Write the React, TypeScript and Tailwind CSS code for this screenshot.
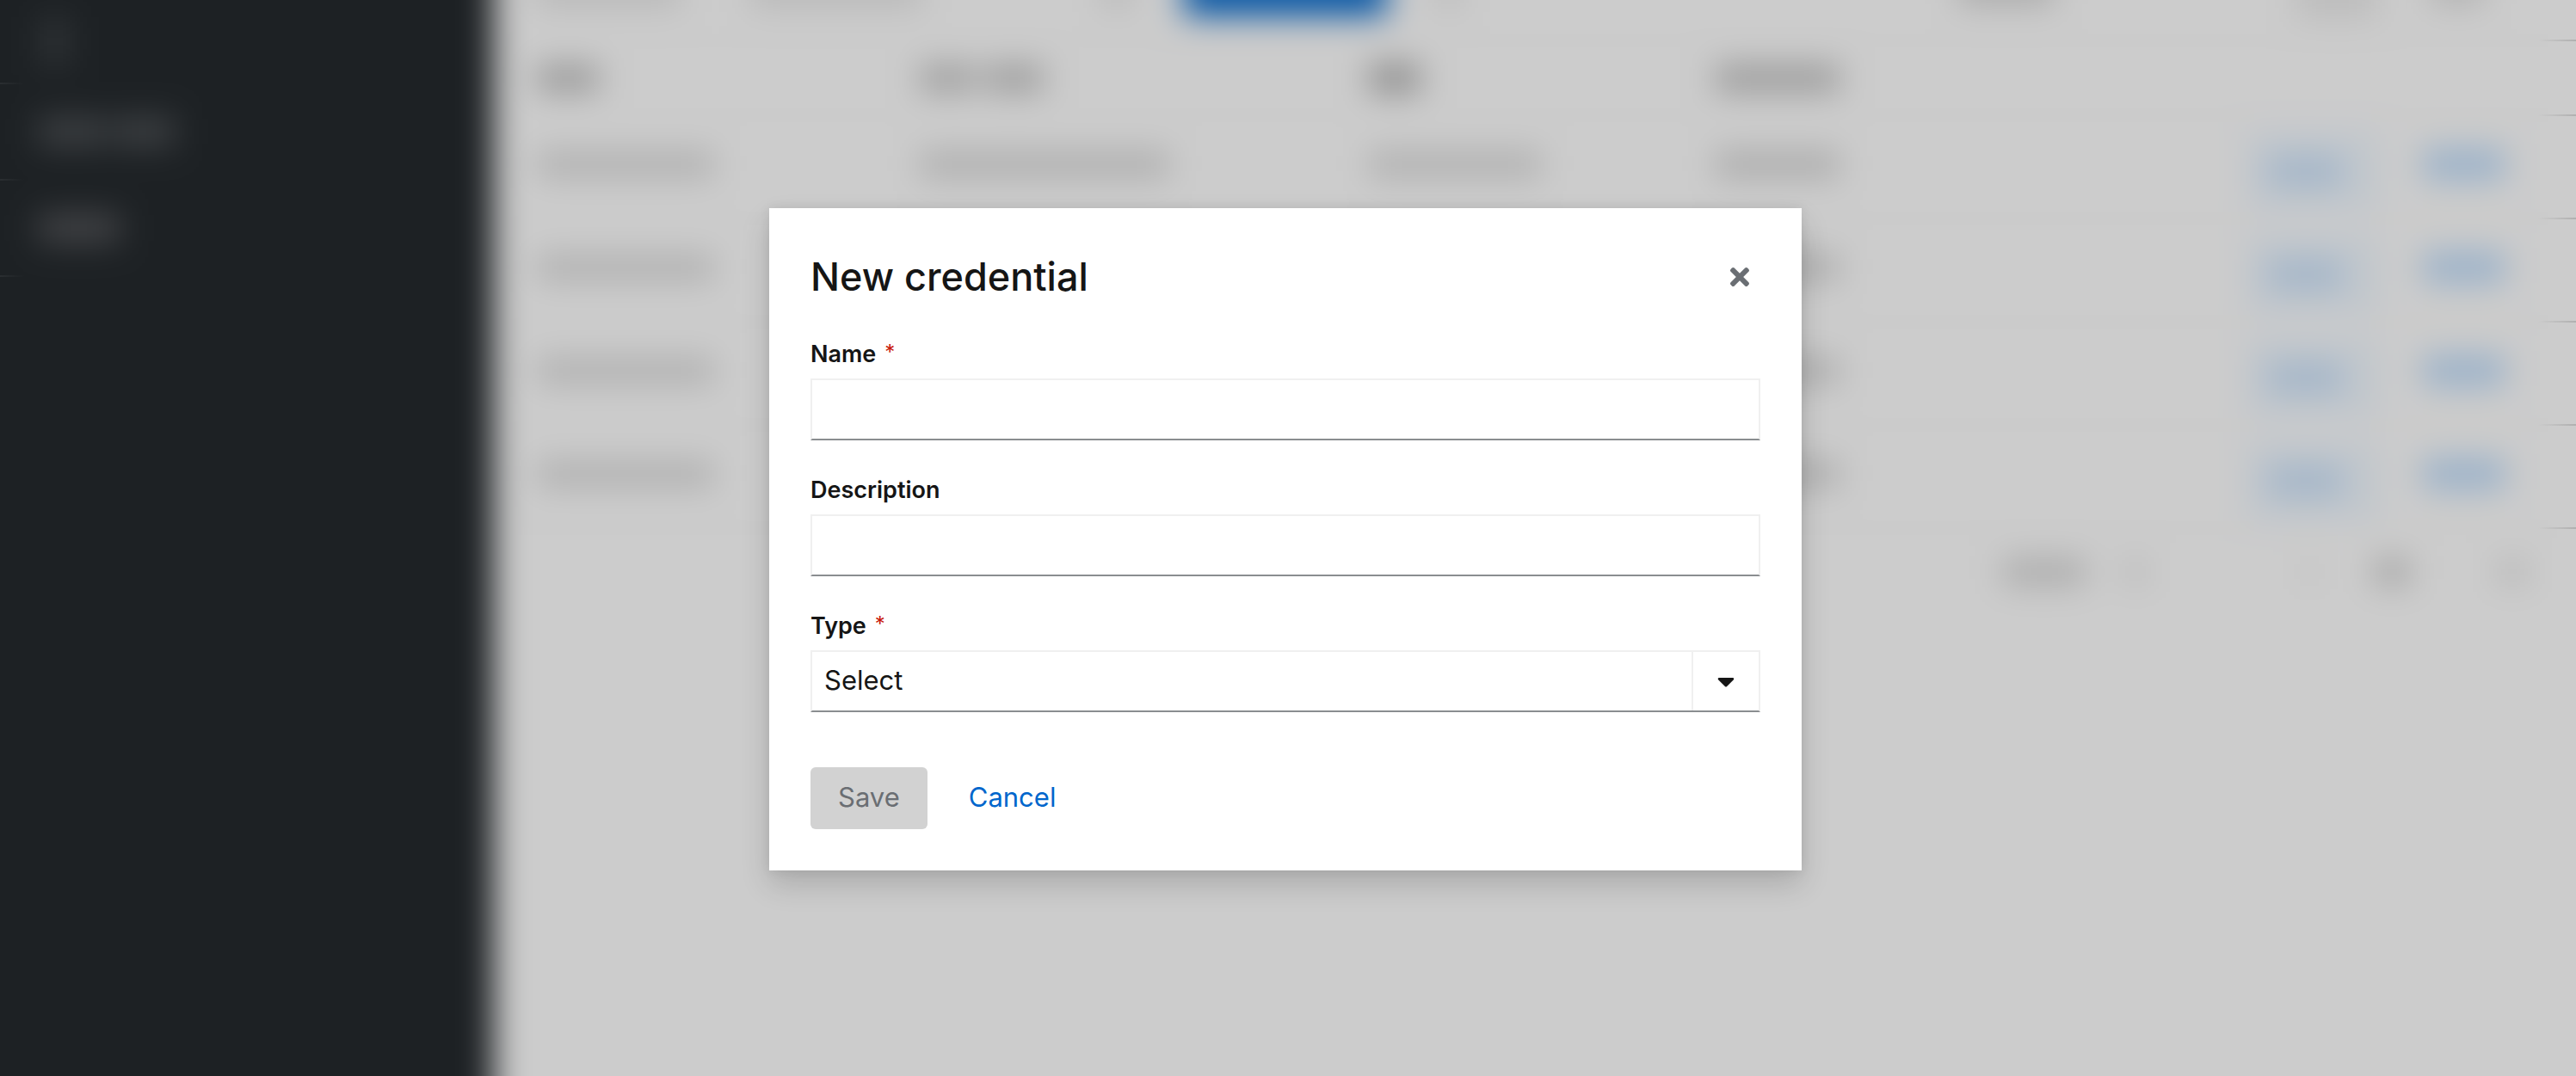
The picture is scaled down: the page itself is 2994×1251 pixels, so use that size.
import { useState } from "react";
import type { ReactNode } from "react";
import { FaCaretDown, FaTimes } from "react-icons/fa";

const rows = [1, 2, 3, 4];

function Sidebar() {
  return (
    <div className="flex w-[638px] shrink-0 flex-col bg-[#1d2124] pt-16 pl-16 shadow-[0_0_16px_8px_rgba(3,3,3,0.2)]">
      <div className="flex h-[98px] items-center border-b-2 border-[#24282b] px-12">
        <span className="h-14 w-8 bg-[#303437]" />
      </div>
      <div className="flex h-28 items-center gap-2 border-b-2 border-[#24282b] px-11">
        <span className="h-8 w-20 bg-[#404346]" />
        <span className="h-8 w-18 bg-[#404346]" />
      </div>
      <div className="flex h-28 items-center border-b-2 border-[#24282b] px-11">
        <span className="h-8 w-24 bg-[#46474a]" />
      </div>
    </div>
  );
}

function Grid({ children, className }: { children: ReactNode; className: string }) {
  return (
    <div
      className={
        "grid grid-cols-[445fr_522fr_402fr_618fr_382fr] items-center border-b-2 border-[#bfbfbf] pl-[50px] " +
        className
      }
    >
      {children}
    </div>
  );
}

function Listing() {
  return (
    <div className="flex min-w-0 grow flex-col bg-[#cccccc] pr-16">
      <div className="flex h-28 shrink-0 items-start border-b-2 border-[#bfbfbf] pt-8 pl-12">
        <span className="h-10 w-[170px] bg-[#b8b8b8]" />
        <span className="ml-20 h-10 w-[200px] bg-[#b8b8b8]" />
        <span className="ml-[210px] h-10 w-8 bg-[#b6b6b6]" />
        <span className="ml-[62px] h-[50px] w-[236px] bg-[#0052a3]" />
        <span className="ml-[60px] h-10 w-6 bg-[#b6b6b6]" />
        <span className="ml-[580px] h-9 w-28 bg-[#a8a8a8]" />
        <span className="ml-[280px] h-13 w-24 bg-[#bcbcbc]" />
        <span className="ml-[60px] h-9 w-16 bg-[#b0b0b0]" />
      </div>
      <Grid className="h-[87px]">
        <span className="h-7 w-18 bg-[#929292]" />
        <span className="flex gap-3">
          <span className="h-7 w-16 bg-[#989898]" />
          <span className="h-7 w-17 bg-[#969696]" />
        </span>
        <span className="h-8 w-15 bg-[#8a8a8a]" />
        <span className="h-7 w-36 bg-[#949494]" />
        <span />
      </Grid>
      {rows.map((row) => (
        <Grid key={row} className="h-[120px] pb-1.5">
          <span className="h-7 w-[206px] bg-[#adadad]" />
          <span className="h-7 w-[290px] bg-[#ababab]" />
          <span className="h-7 w-[200px] bg-[#adadad]" />
          <span className="h-7 w-36 bg-[#a8a8a8]" />
          <span className="flex items-center gap-13">
            <span className="mt-4 flex h-[88px] w-38 items-center border-8 border-[#bcc4cc] bg-[#c2c8cd] px-4">
              <span className="h-9 w-22 bg-[#a3b5c9]" />
            </span>
            <span className="h-9 w-[96px] bg-[#98b0c9]" />
          </span>
        </Grid>
      ))}
      <div className="flex h-[100px] items-center justify-end pr-14">
        <span className="h-7 w-24 bg-[#a8a8a8]" />
        <span className="ml-12 h-6 w-5 bg-[#b0b0b0]" />
        <span className="ml-[184px] h-5 w-4 bg-[#bcbcbc]" />
        <span className="ml-[68px] h-7 w-10 bg-[#a0a0a0]" />
        <span className="ml-[102px] h-6 w-9 bg-[#b4b4b4]" />
      </div>
    </div>
  );
}

function Edges() {
  return (
    <div className="absolute inset-0 flex items-start justify-between">
      <div className="w-7">
        {["h-[98px]", "h-28", "h-28"].map((h, i) => (
          <div key={i} className={"flex flex-col justify-end " + h}>
            <div className="h-0.5 bg-linear-to-l from-transparent to-[#2a2e31]" />
          </div>
        ))}
      </div>
      <div className="w-11">
        {["h-12", "h-[87px]", "h-[120px]", "h-[120px]", "h-[120px]", "h-[120px]"].map((h, i) => (
          <div key={i} className={"flex flex-col justify-end " + h}>
            <div className="h-0.5 bg-linear-to-r from-transparent to-[#b0b0b0]" />
          </div>
        ))}
      </div>
    </div>
  );
}

function Label({ id, required, children }: { id: string; required?: boolean; children: ReactNode }) {
  return (
    <label htmlFor={id} className="flex h-[46px] items-center gap-2.5 text-[27px] font-semibold">
      {children}
      {required && <span className="pb-1.5 text-2xl leading-8 font-normal text-[#c9190b]">*</span>}
    </label>
  );
}

const control =
  "h-[72px] w-full appearance-none rounded-none border-2 border-[#f0f0f0] border-b-[#8a8d90] bg-white px-3.5 text-[31px] text-[#151515] outline-none";

export default function App() {
  const [name, setName] = useState("");
  const [description, setDescription] = useState("");
  return (
    <div className="relative h-screen overflow-hidden bg-[#cccccc] font-['Inter',sans-serif] text-[#151515]">
      <div className="absolute -inset-16 flex blur-[19px]" aria-hidden="true">
        <Sidebar />
        <Listing />
      </div>
      <Edges />
      <div className="absolute inset-0 flex items-center justify-center pt-0.5 pr-1.5">
        <div
          role="dialog"
          aria-modal="true"
          aria-labelledby="title"
          className="w-[1200px] max-w-full bg-white p-12 shadow-[0_16px_32px_rgba(3,3,3,0.16),0_0_12px_rgba(3,3,3,0.08)]"
        >
          <header className="flex h-16 items-center justify-between">
            <h1 id="title" className="text-[45px] leading-[64px] font-medium">
              New credential
            </h1>
            <button type="button" aria-label="Close" className="p-2 text-[32px] text-[#6a6e73]">
              <FaTimes />
            </button>
          </header>
          <form className="mt-9 flex flex-col gap-9" onSubmit={(e) => e.preventDefault()}>
            <div>
              <Label id="name" required>
                Name
              </Label>
              <input
                id="name"
                className={"mt-1 block " + control}
                value={name}
                onChange={(e) => setName(e.target.value)}
              />
            </div>
            <div>
              <Label id="description">Description</Label>
              <input
                id="description"
                className={"mt-1 block " + control}
                value={description}
                onChange={(e) => setDescription(e.target.value)}
              />
            </div>
            <div>
              <Label id="type" required>
                Type
              </Label>
              <div className="relative mt-1">
                <select id="type" className={"block " + control}>
                  <option>Select</option>
                </select>
                <span className="pointer-events-none absolute top-0.5 right-0.5 bottom-0.5 flex w-[78px] items-center justify-center border-l-2 border-[#f0f0f0] text-[32px]">
                  <FaCaretDown />
                </span>
              </div>
            </div>
            <div className="mt-7 flex gap-4 text-[31px]">
              <button type="submit" disabled className="h-[72px] rounded-md bg-[#d2d2d2] px-8 text-[#6a6e73]">
                Save
              </button>
              <button type="button" className="h-[72px] px-8 text-[#0066cc]">
                Cancel
              </button>
            </div>
          </form>
        </div>
      </div>
    </div>
  );
}
